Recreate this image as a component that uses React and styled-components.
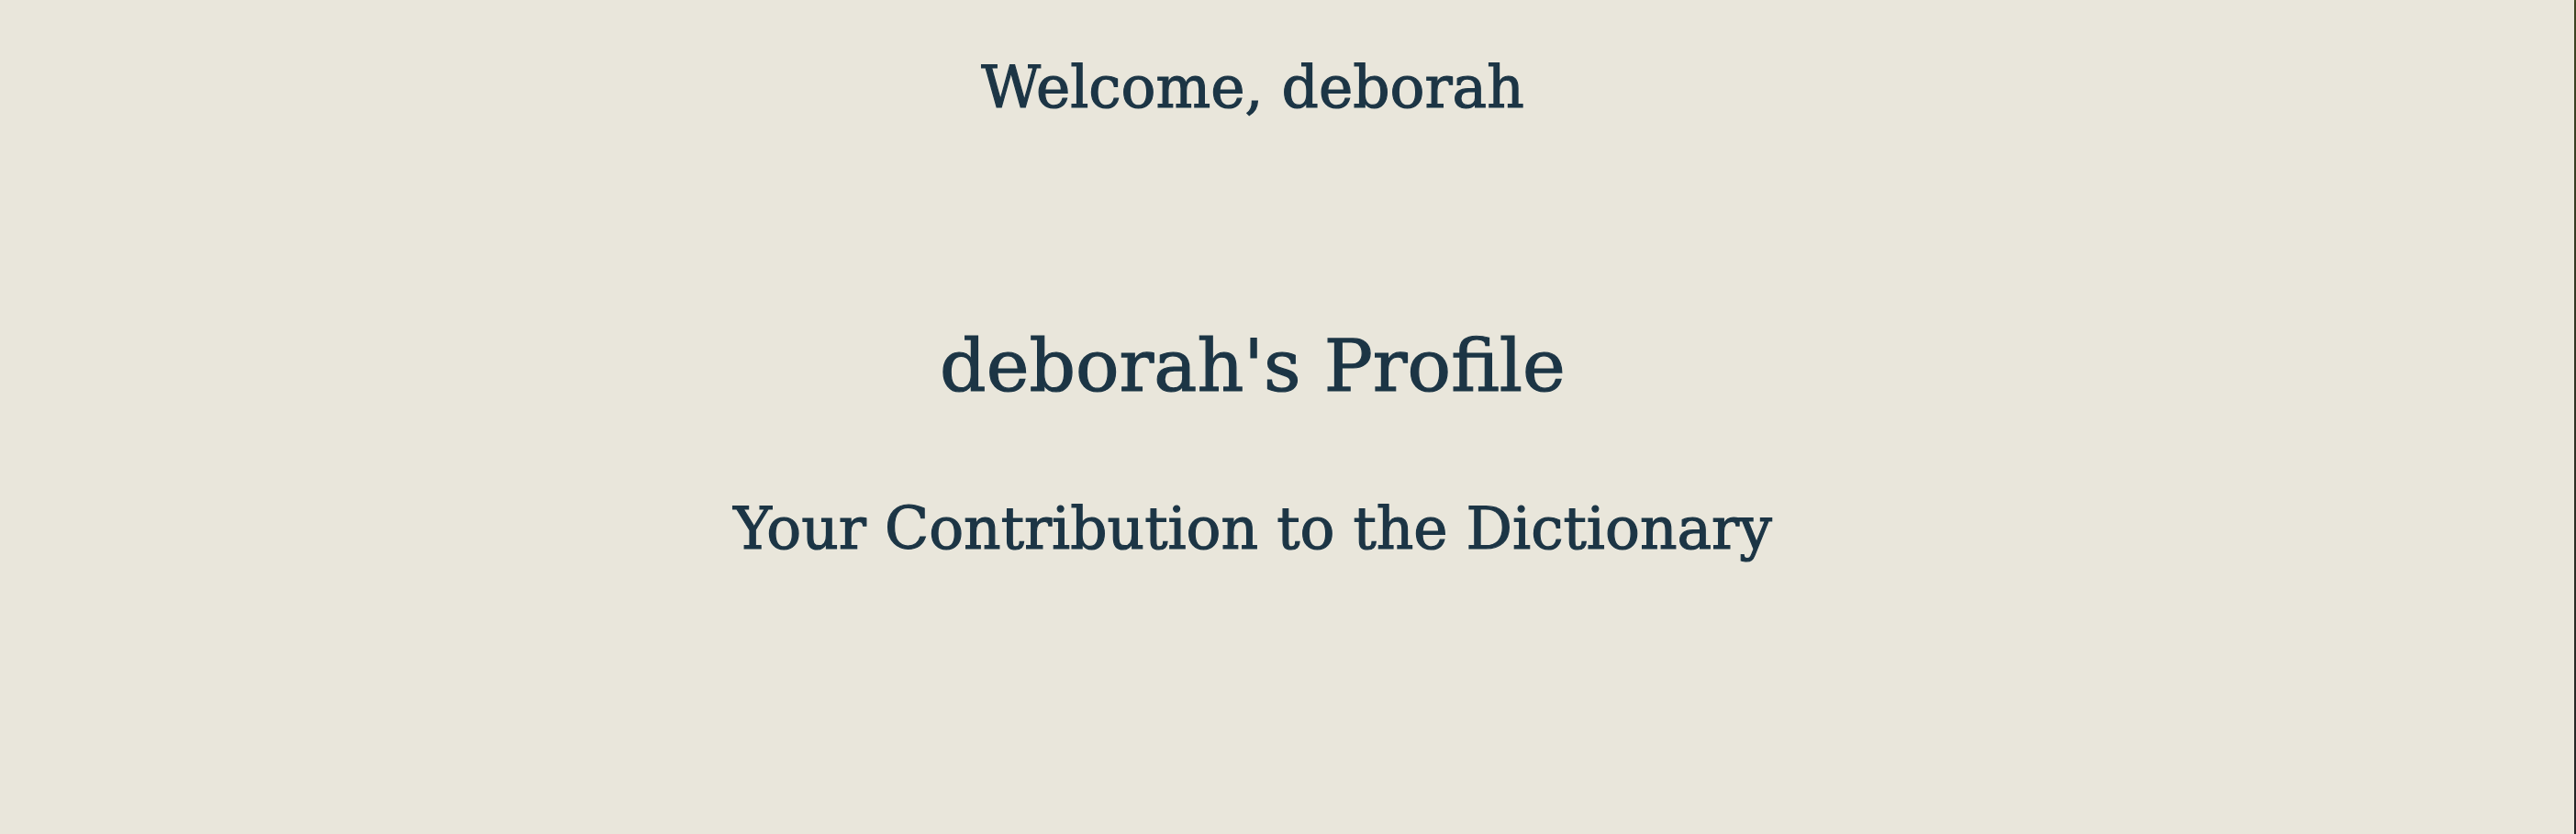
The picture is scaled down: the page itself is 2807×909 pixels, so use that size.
import React from 'react';
import styled, { createGlobalStyle } from 'styled-components';

const GlobalStyle = createGlobalStyle`
  html, body {
    margin: 0;
    padding: 0;
    background: #2f3320;
  }
  body {
    font-family: "DejaVu Serif", "Liberation Serif", serif;
  }
`;

const Page = styled.div`
  display: flex;
  height: 909px;
  background: linear-gradient(180deg, #4b5328 0%, #3a3c2c 50%, #2a2c2e 100%);
`;

const Panel = styled.div`
  width: 2805px;
  height: 100%;
  background: #e9e6db;
  box-shadow: 2px 0 4px rgba(0, 0, 0, 0.25);
  padding-right: 75px;
  box-sizing: border-box;
  color: #1c3545;
  display: flex;
  flex-direction: column;
  align-items: center;
`;

const Heading = styled.h2`
  margin: ${(p) => p.$top}px 0 0;
  font-size: ${(p) => p.$size}px;
  font-weight: 400;
  line-height: 1;
  white-space: nowrap;
  -webkit-text-stroke: 1.2px currentColor;
`;

export default function App() {
  return (
    <>
      <GlobalStyle />
      <Page>
        <Panel>
          <Heading $top={64} $size={63}>Welcome, deborah</Heading>
          <Heading as="h1" $top={233} $size={79}>deborah's Profile</Heading>
          <Heading $top={106} $size={63}>Your Contribution to the Dictionary</Heading>
        </Panel>
      </Page>
    </>
  );
}
